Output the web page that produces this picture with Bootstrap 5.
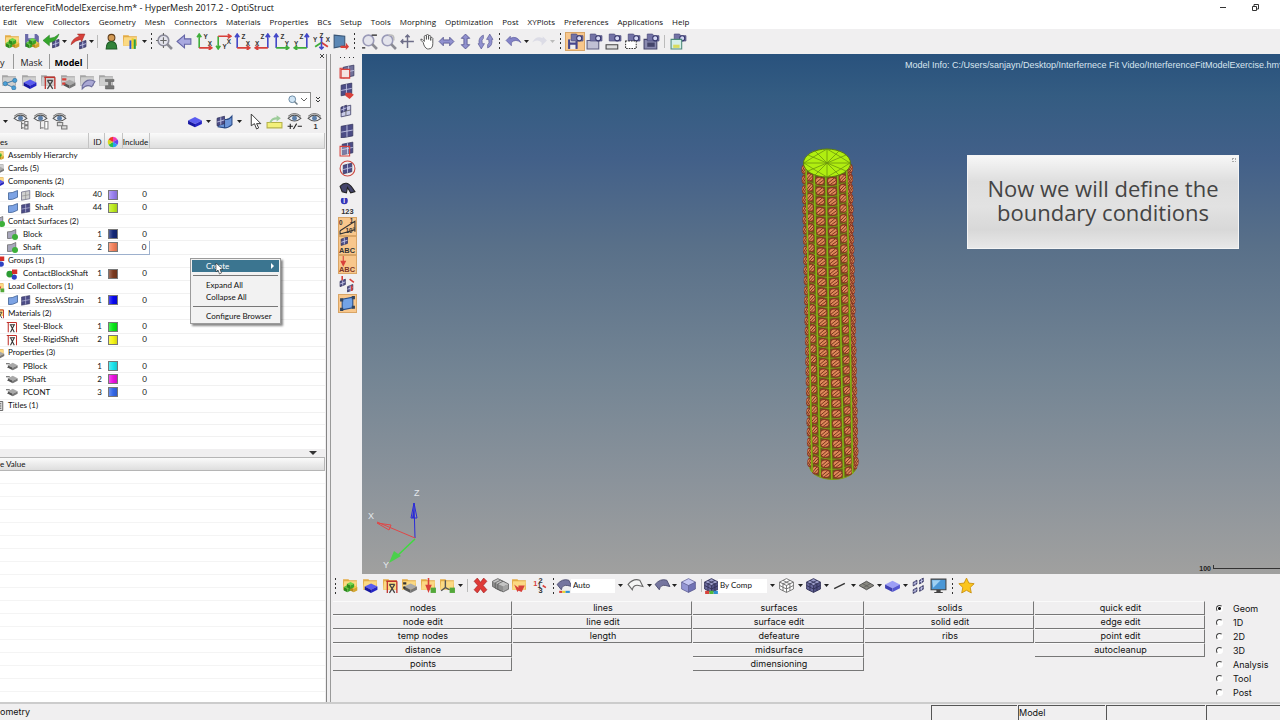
<!DOCTYPE html>
<html lang="en">
<head>
<meta charset="utf-8">
<meta name="viewport" content="width=device-width, initial-scale=1">
<title>HyperMesh 2017.2 - OptiStruct</title>
<link href="https://cdn.jsdelivr.net/npm/bootstrap@5.3.0/dist/css/bootstrap.min.css" rel="stylesheet">
<style>
  body { font: 8px/13px Lato, "Liberation Sans", sans-serif; color: #111; background: #f0eff0; }
  button, select, input { font: inherit; color: inherit; }
  svg { display: block; }
  .title-strip { height: 16px; background: #fff; font: 9px/16px "Open Sans", sans-serif; color: #111; }
  .title-text { margin-left: -4px; }
  .menu-strip { height: 13px; background: #fff; gap: 9px; padding-left: 3px; font: 8px/12px "Open Sans", sans-serif; }
  .menu-strip a { color: #111; text-decoration: none; }
  .tool-strip { height: 25px; padding-bottom: 1px; }
  .slot { flex: none; display: flex; align-items: center; justify-content: center; padding: 0; border: 0; background: none; }
  .slot.on { background: #f8c78c; outline: 1px solid #d9a566; outline-offset: -1px; height: 19px; }
  .left-pane { width: 331px; flex: none; border-right: 1px solid #9a9a9a; padding-right: 3px; }
  .left-inner { border-right: 1px solid #858585; padding-right: 1px; }
  .tab-strip { height: 16px; font: 9px/18px "Open Sans", sans-serif; border-bottom: 1px solid #fff; }
  .tab-strip a { color: #222; text-decoration: none; border-right: 1px solid #999; }
  .tab-strip .t1 { width: 14px; } .tab-strip .t2 { width: 36px; } .tab-strip .t3 { width: 38px; color: #000; }
  .folder-strip { height: 22px; }
  .find-row { height: 17px; }
  .find-box { width: 311px; height: 16px; border: 1px solid #8c8c8c; border-left: 0; background: #fff; }
  .find-box input { border: 0; outline: 0; min-width: 0; background: transparent; }
  .filter-strip { height: 24px; }
  .model-tree { width: 100%; height: 304px; table-layout: fixed; background: #fff; border-collapse: collapse; }
  .model-tree th { height: 15px; padding: 3px 0 0; font-weight: 400; background: linear-gradient(#fafafa, #dedede); border-right: 1px solid #c4c4c4; border-bottom: 1px solid #c8c8c8; line-height: 11px; }
  .model-tree td { padding: 0; border-bottom: 1px solid #f1f1f1; line-height: 11px; white-space: nowrap; overflow: hidden; }
  .model-tree .num { text-align: right; padding-right: 2px; }
  .model-tree .picked td:not(:last-child) { border-top: 1px solid #9db0cd; border-bottom: 1px solid #9db0cd; }
  .model-tree .picked td:nth-child(4) { border-right: 1px solid #9db0cd; }
  .node { display: flex; align-items: center; gap: 1px; height: 11px; }
  .node svg { flex: none; }
  .node.top { margin-left: -7px; gap: 3px; }
  .node.leaf { padding-left: 6px; gap: 5px; }
  .node.comp { padding-left: 7px; }
  .node.comp span:last-child { padding-left: 2px; }
  .chip { display: block; width: 10px; height: 10px; margin: 0 auto; border: 1px solid #777; background-image: linear-gradient(90deg, #fff4, #fff0 50%, #0002); }
  .splitter { height: 8px; }
  .value-head { height: 14px; background: linear-gradient(#fafafa, #dedede); border: 1px solid #b5b5b5; border-left: 0; line-height: 13px; }
  .value-body { background: repeating-linear-gradient(#fff 0 12px, #f4f4f4 12px 13px); }
  .popup { left: 190px; top: 204px; width: 91px; border: 1px solid #9b9b9b; background: #f2f2f2; box-shadow: 2px 2px 2px #0007; padding: 1px; z-index: 5; }
  .popup button { display: block; width: 100%; border: 0; background: none; text-align: left; padding: 0 0 0 14px; line-height: 12px; }
  .popup .hot { background: #3b7590; color: #fff; }
  .popup hr { margin: 3px 1px; border-color: #777; opacity: 1; }
  .popup .pointer-mark { left: 24px; top: 3px; }
  .side-strip { width: 31px; flex: none; }
  .side-stack { height: 251px; padding-left: 1px; }
  .side-strip .slot { height: 19px; width: 19px; }
  .scene { background: linear-gradient(#29527d 0, #345c82 8%, #426089 20%, #597089 37%, #748594 62%, #8b939b 82%, #a0a09f 100%); }
  .scene .info { left: 543px; top: 5px; font: 9px/13px "Liberation Sans", sans-serif; color: #d9e6f0; white-space: nowrap; }
  .part { left: calc(50% - 21px); top: 93px; }
  .triad { left: 0; bottom: 0; }
  .ruler { right: 0; bottom: 1px; font: bold 7px/8px "Liberation Sans", sans-serif; color: #222; gap: 2px; }
  .ruler i { width: 67px; height: 4px; border: solid #333; border-width: 0 0 1px 1px; }
  .note { right: 41px; top: 101px; width: 272px; height: 94px; padding-bottom: 5px; border: 1px solid #f5f5f5; background: linear-gradient(#f7f7f7, #dedede 28%, #e2e2e2 55%, #d8d8d8 80%, #e8e8e8); font: 22px/24px "Open Sans", sans-serif; color: #444; }
  .note i { right: 2px; top: 2px; width: 4px; height: 4px; border: 1px dotted #aaa; }
  .lower-strip { height: 23px; }
  .pick { appearance: none; border: 0; border-radius: 0; height: 14px; padding: 0 0 0 2px; background: #fff; }
  .auto { width: 44px; } .bycomp { width: 49px; }
  .panel { display: grid; grid-template-columns: 180fr 180fr 172fr 170fr 171fr 74px; padding: 4px 0 0 2px; height: 105px; flex: none; font: 9px/13px Inter, "Liberation Sans", sans-serif; }
  .panel .stack { padding-right: 1px; }
  .panel button { display: block; width: 100%; height: 14px; padding: 0 0 0 2px; border: 0; border-right: 1px solid #777; border-bottom: 1px solid #777; border-top: 1px solid #fafafa; background: none; line-height: 12px; }
  .panel label { display: flex; align-items: center; height: 14px; gap: 10px; padding-left: 10px; }
  .panel input { appearance: none; width: 7px; height: 7px; margin: 0; border-radius: 50%; border: 1px solid #444; border-right-color: #fff; border-bottom-color: #fff; background: #fff; }
  .panel input:checked { background: radial-gradient(#111 0 1px, #fff 2px); }
  .foot { height: 18px; border-top: 2px solid #ccc; font: 9px/14px Inter, "Liberation Sans", sans-serif; padding-top: 1px; }
  .foot .cell { border-top: 1px solid #555; border-left: 1px solid #555; margin-right: 1px; }
  .c1 { width: 86px; } .c2 { width: 87px; } .c3 { width: 99px; } .c4 { width: 74px; }
</style>
</head>
<body>
<div class="vh-100 d-flex flex-column overflow-hidden">
  <header class="title-strip d-flex justify-content-between flex-shrink-0">
    <span class="title-text">nterferenceFitModelExercise.hm* - HyperMesh 2017.2 - OptiStruct</span>
    <span class="d-flex align-items-start pe-3 me-1">
      <button class="slot me-4 pt-1" aria-label="Minimize"><svg width="8" height="8"><path d="M1 3.500h6" stroke="#333"/></svg></button>
      <button class="slot pt-1" aria-label="Restore"><svg width="9" height="9" fill="none" stroke="#333"><path d="M1.500 2.500h4v4h-4zM3 2V.5h4.500v4.500H6"/></svg></button>
    </span>
  </header>
  <nav class="menu-strip d-flex flex-shrink-0">
    <a href="#">Edit</a><a href="#">View</a><a href="#">Collectors</a><a href="#">Geometry</a><a href="#">Mesh</a><a href="#">Connectors</a><a href="#">Materials</a><a href="#">Properties</a><a href="#">BCs</a><a href="#">Setup</a><a href="#">Tools</a><a href="#">Morphing</a><a href="#">Optimization</a><a href="#">Post</a><a href="#">XYPlots</a><a href="#">Preferences</a><a href="#">Applications</a><a href="#">Help</a>
  </nav>
  <div class="tool-strip d-flex align-items-center flex-shrink-0" data-bar="gap:3 open:19 save:20 import:18 caret:8 export:20 caret:6 sep:7 user:20 report:19 caret:8 dots:7 fit:19 back:20 xy:20 xyd:19 xz:19 xzl:20 yz:19 yzl:20 iso:20 screen:19 dots:10 zoom:18 zoom2:20 pan4:19 hand:20 horiz:19 vert:19 spin:20 dots:9 undo:18 caret:8 redo:18 caretoff:9 dots:8 cam1*:20 cam2:19 cam3:18 cam4:20 cam5:19 sep:7 cam6:20"></div>

  <div class="d-flex flex-fill overflow-hidden">
    <aside class="left-pane position-relative d-flex flex-column">
      <div class="left-inner d-flex flex-column flex-fill overflow-hidden">
        <div class="tab-strip d-flex position-relative text-center flex-shrink-0">
          <a class="t1 text-start" href="#">y</a><a class="t2" href="#">Mask</a><a class="t3 fw-bold" href="#">Model</a>
          <button class="slot ms-auto align-self-start" aria-label="Close"><svg width="6" height="6" stroke="#444"><path d="M1 0l4 4M5 0L1 4"/></svg></button>
        </div>
        <div class="folder-strip d-flex align-items-center flex-shrink-0" data-bar="fshare:19 fslab:20 fmat:19 fprop:20 fload:19 fstack:19"></div>
        <div class="find-row d-flex flex-shrink-0">
          <div class="find-box d-flex align-items-center">
            <input class="flex-fill" type="text" aria-label="Search">
            <span data-icon="glass"></span><svg width="11" height="8" fill="none" stroke="#666"><path d="M2 2l3 3 3-3"/></svg>
          </div>
          <button class="slot ps-1" aria-label="More"><svg width="7" height="9" fill="none" stroke="#333"><path d="M1 1l2 2 2-2M1 4l2 2 2-2"/></svg></button>
        </div>
        <div class="filter-strip d-flex align-items-center flex-shrink-0" data-bar="gap:1 caret:8 gap:2 eye1:19 eye2:20 eye3:19 gap:116 slab:20 caret:6 gap:2 surf:22 caret:8 gap:2 arrow:20 yellow:19 eye4:20 eye5:20"></div>
        <table class="model-tree flex-shrink-0">
          <colgroup><col style="width:88px"><col style="width:16px"><col style="width:18px"><col style="width:27px"><col></colgroup>
          <thead><tr><th>es</th><th class="num">ID</th><th><span class="d-flex justify-content-center" data-icon="wheel"></span></th><th class="text-center">Include</th><th></th></tr></thead>
          <tbody id="tree"></tbody>
          <tfoot><tr><td colspan="5">&nbsp;</td></tr><tr><td colspan="5">&nbsp;</td></tr></tfoot>
        </table>
        <div class="bg-white pt-2 pb-1 flex-shrink-0"></div>
        <div class="splitter d-flex justify-content-end flex-shrink-0 pe-2 align-items-center"><svg width="8" height="5"><path d="M0 0h8L4 4z" fill="#333"/></svg></div>
        <div class="value-head flex-shrink-0">e Value</div>
        <div class="value-body flex-fill"></div>
      </div>
      <div class="popup position-absolute" role="menu">
        <button class="hot" role="menuitem"><span class="d-flex justify-content-between align-items-center pe-1">Create<svg width="4" height="6"><path d="M0 0l3 3-3 3z" fill="#fff"/></svg></span></button>
        <hr><button role="menuitem">Expand All</button><button role="menuitem">Collapse All</button>
        <hr><button role="menuitem">Configure Browser</button>
        <svg class="pointer-mark position-absolute" width="9" height="13" viewBox="0 0 9 13"><path d="M1 1v9l2-2 1.500 4 2-1L5 7.500h3z" fill="#fff" stroke="#222" stroke-width=".6"/></svg>
      </div>
    </aside>

    <main class="d-flex flex-column flex-fill overflow-hidden">
      <div class="d-flex flex-fill overflow-hidden">
        <div class="side-strip d-flex flex-column align-items-center">
          <svg width="16" height="8" fill="#333"><path d="M1 3h1v1H1zM5 3h1v1H5zM10 3h1v1h-1zM14 3h1v1h-1z"/></svg>
          <div class="side-stack d-flex flex-column align-items-center justify-content-between" data-bar="m1:19 m2:19 m3:19 m4:19 m5:19 m6:19 m7:19 m8:19 m9*:19 m10*:19 m11*:19 m12:19 m13*:19"></div>
        </div>
        <section class="scene position-relative flex-fill overflow-hidden">
          <div class="info position-absolute">Model Info: C:/Users/sanjayn/Desktop/Interfernece Fit Video/InterferenceFitModelExercise.hm*</div>
          <svg class="part position-absolute" width="60" height="336" viewBox="0 0 60 336" id="part"></svg>
          <svg class="triad position-absolute" width="80" height="90" viewBox="0 0 80 90" fill="none" font-family="Liberation Sans" font-size="9">
            <path d="M53 54L52 19M52 19l-3 15h6z" stroke="#2b2bd8"/><path d="M52 22l-2 12h2z" fill="#2b2bd8"/>
            <path d="M53 54L15 38M15 39l14 2-2 5z" stroke="#e04747"/>
            <path d="M53 55L33 74" stroke="#3ddc3d" stroke-width="1.500"/><path d="M27 79l5-12 7 5z" fill="#4bd04b"/>
            <g fill="#e4e8ec"><text x="52" y="12">Z</text><text x="6" y="35">X</text><text x="21" y="84">Y</text></g>
          </svg>
          <div class="ruler position-absolute d-flex"><span>100</span><i></i></div>
          <div class="note position-absolute d-flex align-items-center justify-content-center text-center"><span>Now we will define the<br>boundary conditions</span><i class="position-absolute"></i></div>
        </section>
      </div>
      <div class="lower-strip d-flex align-items-center flex-shrink-0">
        <div class="d-flex align-items-center" data-bar="dots:10 ccubes:19 cslab:20 cmat:20 cprop:19 cload:19 csys:18 caret:8 sep:6 del:20 cards:20 cmove:19 renum:20 dots:9 geo:13"></div>
        <select class="pick auto" aria-label="Geometry colour"><option>Auto</option></select>
        <div class="d-flex align-items-center" data-bar="caret:10 sheet:20 caret:8 sheetf:18 caret:7 cube:20 sep:6 meshc:14"></div>
        <select class="pick bycomp" aria-label="Element colour"><option>By Comp</option></select>
        <div class="d-flex align-items-center" data-bar="caret:10 wcube:19 caret:8 mcube:18 caret:8 line:19 caret:8 plate:18 caret:8 slabl:18 caret:8 bits:19 monitor:20 dots:9 star:19"></div>
      </div>
      <div class="panel">
        <div class="stack"><button>nodes</button><button>node edit</button><button>temp nodes</button><button>distance</button><button>points</button></div>
        <div class="stack"><button>lines</button><button>line edit</button><button>length</button></div>
        <div class="stack"><button>surfaces</button><button>surface edit</button><button>defeature</button><button>midsurface</button><button>dimensioning</button></div>
        <div class="stack"><button>solids</button><button>solid edit</button><button>ribs</button></div>
        <div class="stack"><button>quick edit</button><button>edge edit</button><button>point edit</button><button>autocleanup</button></div>
        <div>
          <label><input type="radio" name="page" checked>Geom</label><label><input type="radio" name="page">1D</label><label><input type="radio" name="page">2D</label><label><input type="radio" name="page">3D</label><label><input type="radio" name="page">Analysis</label><label><input type="radio" name="page">Tool</label><label><input type="radio" name="page">Post</label>
        </div>
      </div>
    </main>
  </div>
  <footer class="foot d-flex flex-shrink-0">
    <span class="flex-fill">ometry</span><span class="cell c1"></span><span class="cell c2">Model</span><span class="cell c3"></span><span class="cell c4 me-0"></span>
  </footer>
</div>

<script>
// Drawing helpers, all on a 16 x 16 canvas
const p = (d, fill, stroke = 'none', w = 1) => `<path d="${d}" fill="${fill}" stroke="${stroke}" stroke-width="${w}"/>`;
const folder = (a, b) => p('M1 2h5l1 1h7v9H1z', b) + p('M2 4h12l-1 8H1z', a);
const yf = folder('#fbd983', '#e3ac45'), gf = folder('#cfcfcf', '#a5a5a5');
const cube = (x, y, s, t, l, r) => p(`M${x} ${y - s}l${s} ${s / 2}l${-s} ${s / 2}l${-s} ${-s / 2}z`, t) +
  p(`M${x - s} ${y - s / 2}l${s} ${s / 2}v${s}l${-s} ${-s / 2}z`, l) + p(`M${x + s} ${y - s / 2}l${-s} ${s / 2}v${s}l${s} ${-s / 2}z`, r);
const slab = (x, y, s, t, l, r) => p(`M${x} ${y - s / 2}l${s} ${s / 2}l${-s} ${s / 2}l${-s} ${-s / 2}z`, t) +
  p(`M${x - s} ${y}l${s} ${s / 2}v${s / 2}l${-s} ${-s / 2}z`, l) + p(`M${x + s} ${y}l${-s} ${s / 2}v${s / 2}l${s} ${-s / 2}z`, r);
const blueSlab = s => slab(8.5, 9, s, '#5a5cf0', '#1616a0', '#2525c4');
const graySlab = (x, y, s) => slab(x, y, s, '#a9a9a9', '#555', '#777');
const mesh = (x, y, w, f = '#4c4c86', l = '#c9cbe8') => p(`M${x} ${y + 2}l${w} -2v${w}l${-w} 2z`, f, '#33335c', .7) +
  p(`M${x + w / 2} ${y + 1}v${w}M${x} ${y + 2 + w / 2}l${w} -2`, 'none', l, .8);
const tri = cube(5, 11, 3.4, '#5ac83a', '#2c8a1c', '#3aa628') + cube(11, 11, 3.4, '#f0c84a', '#b98a1a', '#d7a62a') + cube(8, 8, 3.4, '#6fd84a', '#2c8a1c', '#3aa628');
const mat = p('M4 4h10M5 4v11M14 4v11', 'none', '#c0322c', 1.2) + p('M7 15l5-8M12 15L7 7M7 7h5', 'none', '#444', 1.2);
const eye = p('M2 5q6-6 12 0q-6 5-12 0z', '#e9ecf2', '#555', 1) + '<circle cx="8" cy="5" r="2.300" fill="#5d7fa8"/>' + p('M2 3q6-5 12 0', 'none', '#555', .8);
const axis = (v, h, a, b, flip, top) => {
  const x = flip ? 13 : 3, y = top ? 3 : 14, e = flip ? 1 : 15, f = top ? 15 : 1;
  return p(`M${x} ${y}V${f}M${x - 2} ${top ? 12 : 4}L${x} ${f}L${x + 2} ${top ? 12 : 4}`, 'none', v, 1.5) + p(`M${x} ${y}H${e}M${flip ? 4 : 12} ${y - 2}L${e} ${y}L${flip ? 4 : 12} ${y + 2}`, 'none', h, 1.5) +
    `<g font-family="Liberation Sans" font-weight="bold" font-size="6" fill="#333"><text x="${flip ? 6 : 7}" y="${top ? 15 : 6}">${a}</text><text x="${flip ? 1 : 11}" y="${top ? 10 : 12}">${b}</text></g>`;
};
const R = '#d8413b', G = '#3fae3a', B = '#4247c8';
const lens = (c = '#9a9ab8') => `<circle cx="7" cy="7" r="5" fill="#e4e4ec" stroke="${c}" stroke-width="1.500"/>` + p('M10.500 10.500l4.500 4.500', 'none', '#8b8b93', 2.5);
const cam = p('M4 1h5l1 1.500h5v5H4z', '#7373a6', '#4d4d7c', .7) + '<circle cx="11.500" cy="5" r="2.400" fill="#d5d8f4" stroke="#36366b"/>';
const dbl = p('M1 8l4-4v2.500h6V4l4 4-4 4V9.500H5V12z', '#9191cf', '#55558f', .8);
const small = (t, x, y, s = 6, c = '#333') => `<text x="${x}" y="${y}" font-family="Liberation Sans" font-weight="bold" font-size="${s}" fill="${c}">${t}</text>`;
const pads = p('M1 7q5-6 11-4l3 6-4-1q-5-1-6 4z', '#75759f', '#444469', .8);
const icons = {
  open: yf + tri, save: p('M1 1h11l2 2v10H1z', '#6a6aa8') + p('M4 1h6v4H4zM3 8h9v5H3z', '#e9e9f5') + tri,
  import: mesh(9, 6, 6) + p('M0 7l6-5v3q5 0 9-4q-2 7-9 8v3z', '#35a62c', '#1f7a1c', .5), export: mesh(9, 7, 6) + p('M14 1H7l2 2q-7 2-8 8q4-4 9-5l1 2z', R, '#992019', .5),
  user: '<circle cx="8" cy="4.500" r="3.200" fill="#d39a55" stroke="#5f3c18"/>' + p('M3 15q0-7 5-7t5 7z', '#31823a', '#1e5a26'), report: yf + p('M7 7h2v8H7z', '#2e58d0') + p('M9 5h2v10H9z', '#f0d020') + p('M11 6h2v9h-2z', '#30a040'),
  fit: lens('#8e8e9e') + p('M7 4v6M4 7h6M7 0v2M7 12v2M0 7h2', 'none', '#666'), back: p('M1 8l7-6v3.500h6v5H8V14z', '#a9a9e0', '#6565a5', 1),
  xy: axis(G, R, 'Y', 'X'), xyd: axis(G, R, 'Y', 'X', 0, 1), xz: axis(B, R, 'Z', 'X'), xzl: axis(B, R, 'Z', 'X', 1), yz: axis(B, G, 'Z', 'Y'), yzl: axis(B, G, 'Z', 'Y', 1),
  iso: p('M8 10V4', 'none', B, 1.6) + p('M8 9l-6 4', 'none', G, 1.8) + p('M8 9l6 4', 'none', R, 1.8) + p('M8 9v6M6 13l2 2 2-2', 'none', B, 1.5) + small('Z', 6, 5) + small('Y', 0, 8) + small('X', 12, 8),
  screen: p('M2 2l10 1v9L2 14z', '#5b87b5', '#3a5676') + p('M8 12h5V9l3 4-3 3v-2H8z', R),
  zoom: lens() + p('M10 2h5M1 14h3', 'none', '#222', 1.4), zoom2: lens() + p('M8 2q6-1 5 5', 'none', '#bbb', 1.5), pan4: p('M8 2v12M2 8h12M6 4l2-2 2 2M4 6L2 8l2 2', 'none', '#6d6d88', 1.4),
  hand: p('M4 9L2 7q-1-2 1-1l2 2V3q1-2 2 0v3-4q1-2 2 0v4-3q1-2 2 0v4-2q1-2 2 0v5q0 5-4 5H8q-3-1-4-6z', '#fff', '#555', .9), horiz: dbl, vert: `<g transform="rotate(90 8 8)">${dbl}</g>`,
  spin: p('M6 2q-5 2-4 8H1l3 5 3-5H5q-1-4 1-5zM10 14q5-2 4-8h1l-3-5-3 5h2q1 4-1 5z', '#9191cf', '#55558f', .6),
  undo: p('M1 7l5 5V9q4-4 9 0Q11 2 5 5V3z', '#8383c8', '#5b5b9b', .6), redo: p('M15 7l-5 5V9q-4-4-9 0q4-7 10-4V3z', '#dcdce6'),
  cam1: p('M1 6h9v9H1z', '#46468c') + p('M3 6h5v3H3zM3 11h5v4H3z', '#eee') + cam, cam2: p('M1 7h11v8H1z', '#c0c0d4', '#5c5c80') + cam, cam3: cam + p('M1 11h11v4H1z', '#ddd', '#444'), cam4: cam + '<path d="M1.500 7.500h10v7h-10z" fill="#fff" stroke="#333" stroke-dasharray="1.500 1"/>', cam5: p('M1 6h12v9H1z', '#8a8ab0', '#44446a') + cam + p('M4 9h7v4H4z', '#44446a'), cam6: cam + p('M1 6h10v9H1z', '#d5efe8', '#4d8a7a') + p('M3 11h6v3H3z', '#d8dc5c'),
  fshare: gf + p('M4 10l8-3M4 10l8 4', 'none', '#3c7cae') + '<g fill="#4aa0d8" stroke="#25638f" stroke-width=".5"><circle cx="4" cy="10" r="2"/><circle cx="13" cy="7" r="2"/><circle cx="12" cy="14" r="2"/></g>',
  fslab: gf + blueSlab(6), fmat: gf + mat, fprop: gf + graySlab(9, 9, 5.5) + p('M2 6h4M2 10h3', 'none', R, 2), fload: gf + p('M3 12q4-8 12-4l-3 5q-5-3-9 2z', '#aaa8d4', '#6d6d9d'), fstack: gf + p('M7 6h8v2h-3v4h3v3H7v-3h3V8H7z', '#777', '#555', .5),
  eye1: eye + p('M9 8v7M9 10h2M9 14h2M12 8h3v3h-3zM12 12h3v3h-3z', 'none', '#777'), eye2: eye + p('M8 8v7M8 14h3M12 8h3v7h-3z', '#fff', '#888'), eye3: eye + p('M6 9h5v3H6zM10 12h5v3h-5z', '#ddd', '#777'), eye4: eye + p('M4 10v5M1.500 12.500h5M7 15l3-5M11 12.500h4', 'none', '#222'), eye5: eye + small('1', 7, 15, 7),
  slab: slab(7.5, 7, 6.5, '#5a5cf0', '#1616a0', '#2525c4'), surf: p('M2 5l6 1v8l-6-1zM8 6q4 1 7-3v8q-3 3-7 3z', '#6c95d8', '#294a86') + mesh(1, 3, 7), arrow: p('M4 1v11l3-2 2 5 2-1-2-4h4z', '#fff', '#333', .9), yellow: p('M1 9h14v5H1z', '#f3f07a', '#b5b14a') + p('M3 9q2-5 7-5V2l4 3-4 3V6Q6 6 5 9z', '#9dcc9a'),
  m1: p('M1 5h9v9H1z', '#fff3', R) + mesh(4, 2, 10, '#71719a') + p('M2 6h8v8H2z', '#f4e4e2', R), m2: mesh(2, 1, 10) + p('M6 10h5l3 2-4 4-4-3z', R), m3: mesh(2, 3, 9, '#c9cbe8', '#666') + mesh(2, 3, 5), m4: mesh(2, 3, 11), m5: mesh(3, 2, 10) + p('M1 6h9v9H1z', '#fff4', R), m6: mesh(4, 3, 8) + '<circle cx="8" cy="8" r="7" fill="none" stroke="#cc4840"/>', m7: p('M1 7q6-7 12 2l2 3-4 1-3-5-1 5-4-1z', '#44446a', '#222'),
  m8: '<circle cx="5" cy="2.500" r="3.300" fill="#3535b8"/>' + small('i', 4, 5, 6, '#fff') + small('123', 2, 15, 7), m9: p('M1 12L15 3v10M1 12v3l14-4', 'none', '#333') + small('0', 0, 7) + small('1', 10, 5) + small('10°', 6, 14), m10: mesh(2, 0, 6) + small('ABC', 0, 15, 7), m11: p('M4 0v7M2 5l2 4 2-4z', R, R) + small('ABC', 0, 15, 7, '#7b3426'), m12: mesh(1, 3, 5) + mesh(8, 8, 5) + p('M3 0v4M12 9v5M10 3l4 3', 'none', R, 1.5), m13: p('M3 4l10-2v10L3 14z', '#72a3e6', '#254d8a') + p('M1 3h3v3H1zM12 1h3v3h-3zM1 12h3v3H1zM12 10h3v3h-3z', '#33445c'),
  ccubes: yf + tri, cslab: yf + blueSlab(6), cmat: yf + mat, cprop: yf + graySlab(9, 9, 6) + p('M2 6h3M2 10h2', 'none', '#333', 2), cload: yf + p('M8 1v9M6 8l2 5 2-5z', R, R, 1.5) + p('M10 10h5v5h-5z', '#53a83a'), csys: yf + p('M6 3v7l-4 3M6 10l4 2', 'none', '#555', 1.3) + p('M10 10h5v5h-5z', '#53a83a'),
  del: p('M2 4l3-3 3 4 3-4 3 3-3.500 4 3.500 4-3 3-3-4-3 4-3-3 3.500-4z', '#df3b38', '#9d1d1c', .6),
  cards: [[5.5, 6.5], [8, 8], [10.5, 9]].map(([x, y]) => cube(x, y, 5, '#c4c4c4', '#8f8f8f', '#a5a5a5') + p(`M${x} ${y - 5}l5 2.500v5l-5 2.500l-5-2.500v-5z`, 'none', '#555', .7)).join(''),
  cmove: yf + p('M3 7l4 3V8h6l-3 6-3-1-1 1z', R), renum: small('1', 2, 8, 7, R) + small('2', 7, 6, 7) + small('3', 7, 15, 7) + small('1', 6, 10, 6) + p('M11 8l3 2', 'none', R, 1.5),
  geo: pads + p('M3 13h3v2H3z', R) + p('M6 13h3v2H6z', '#e8d32c') + p('M9 13h4v2H9z', '#2f8fd0'), sheet: p('M1 7q5-6 11-4l3 6-4-1q-5-1-6 4z', '#f6f6f6', '#666'), sheetf: pads, cube: cube(8, 8, 6.5, '#c5c7f2', '#9496d4', '#7072b4') + p('M8 1.500l6.500 3.300v6.500L8 14.500l-6.500-3.200V4.800zM1.500 4.800L8 8l6.500-3.200M8 8v6.500', 'none', '#4c4c82', .6),
  line: p('M3 11l10-5', 'none', '#333', 1.3), plate: p('M1 8l7-4 7 4-7 4z', '#87877f', '#444', .8) + p('M4 6l7 4M5 10l7-4', 'none', '#555', .6), slabl: slab(8, 7, 7, '#9c9ef6', '#3f41b4', '#5557d0'), bits: mesh(3, 3, 3.500) + mesh(9, 1, 3.500) + mesh(3, 10, 3.500) + mesh(9, 8, 3.500), monitor: p('M1 2h14v10H1z', '#4a97d6', '#444') + p('M6 12h4v2h2v1H4v-1h2z', '#444') + p('M2 3h8L3 10z', '#9fd0f2'),
  star: p('M8 1l2.200 4.700 5 .6-3.700 3.500 1 5.200L8 12.500 3.500 15l1-5.200L.8 6.300l5-.6z', '#fbc51d', '#c78d0c', .8),
  glass: '<circle cx="7" cy="7" r="4.500" fill="#cfe4f4" stroke="#6b8aa5" stroke-width="1.300"/>' + p('M10 10l4 4', 'none', '#70808c', 2),
  wheel: p('M8 8V1a7 7 0 0 1 6 3.500z', '#f03cb4') + p('M8 8l6-3.500a7 7 0 0 1 0 7z', '#6a42e8') + p('M8 8l6 3.500a7 7 0 0 1-6 3.500z', '#28a0f0') + p('M8 8v7a7 7 0 0 1-6-3.500z', '#24c04c') + p('M8 8l-6 3.500a7 7 0 0 1 0-7z', '#d8d820') + p('M8 8L2 4.500A7 7 0 0 1 8 1z', '#f03c28'),
  plane: p('M2 5q4 1 12-3v9q-7 4-12 3z', '#7da3e4', '#37598f'), mg: mesh(2, 2, 11, '#d0d0d0', '#888'), md: mesh(2, 2, 11), cs: p('M2 5q4 1 11-3v9q-6 4-11 3z', '#a7a7bc', '#666') + '<circle cx="12" cy="12" r="4" fill="#3db03a"/>',
  grp: '<circle cx="5" cy="8" r="4.500" fill="#2c9c34"/>' + p('M8 2h7v6H8z', '#d42e2a') + '<circle cx="11" cy="12" r="3.500" fill="#2f42c4"/>', mt: p('M1 2h13M3 2v13M14 2v13', 'none', '#c0322c', 1.4) + p('M6 15l5-10M11 15L6 5M5 5h7', 'none', '#333', 1.4), pr: graySlab(9, 7, 6.500) + p('M0 5h5M2 10h3', 'none', '#555', 1.5), list: p('M3 2h10v12H3z', '#ddd', '#444') + p('M5 5h6M5 8h6M5 11h6', 'none', '#333'), blue: yf + blueSlab(6)
};
const cubeNet = 'M8 1.500l6.500 3.300v6.500L8 14.500l-6.500-3.200V4.800zM1.500 4.800L8 8l6.500-3.200M8 8v6.500M4.700 3.200l6.500 3.300v6.500M11.300 3.200L4.700 6.500V13M1.500 8L8 11.300 14.500 8';
icons.wcube = p(cubeNet, '#fff', '#666', .8);
icons.mcube = cube(8, 8, 6.5, '#9a9cc8', '#6a6a9c', '#525284') + p(cubeNet, 'none', '#2f2f55', .8);
icons.meshc = icons.mcube + p('M2 13h4v3H2z', R) + p('M6 13h4v3H6z', '#4fb83a') + p('M10 13h4v3h-4z', '#2f8fd0');
const draw = (name, s) => `<svg class="flex-shrink-0" width="${s}" height="${s}" viewBox="0 0 16 16" aria-hidden="true">${icons[name]}</svg>`;

document.querySelectorAll('[data-bar]').forEach(bar => {
  bar.innerHTML = bar.dataset.bar.split(' ').map(item => {
    let [name, w] = item.split(':'), on = name.endsWith('*');
    name = name.replace('*', '');
    const box = inner => `<span class="slot" style="width:${w}px">${inner}</span>`;
    if (name === 'gap') return box('');
    if (name === 'caret' || name === 'caretoff') return box(`<svg width="5" height="3"><path d="M0 0h5L2.500 3z" fill="${name === 'caret' ? '#222' : '#bbb'}"/></svg>`);
    if (name === 'sep') return box('<svg width="1" height="13"><path d="M0 0h1v13H0z" fill="#bbb"/></svg>');
    if (name === 'dots') return box('<svg width="2" height="16"><path d="M0 0h1v2H0zM0 5h1v2H0zM0 9h1v2H0zM0 14h1v2H0z" fill="#333"/></svg>');
    return `<button class="slot${on ? ' on' : ''}" style="width:${w}px" aria-label="${name}">${draw(name, 17)}</button>`;
  }).join('');
});
document.querySelectorAll('[data-icon]').forEach(el => el.innerHTML = draw(el.dataset.icon, 12));

// [kind, icons, label, id, colour]
const rows = [
  ['top', 'open', 'Assembly Hierarchy'], ['top', 'fprop', 'Cards (5)'], ['top', 'blue', 'Components (2)'],
  ['comp', 'plane mg', 'Block', 40, '#9a80f0'], ['comp', 'plane md', 'Shaft', 44, '#bdec1c'],
  ['top', 'cs', 'Contact Surfaces (2)'], ['leaf', 'cs', 'Block', 1, '#142878'], ['leaf', 'cs', 'Shaft', 2, '#f5825c'],
  ['top', 'grp', 'Groups (1)'], ['leaf', 'grp', 'ContactBlockShaft', 1, '#7c3a20'],
  ['top', 'cload', 'Load Collectors (1)'], ['comp', 'plane md', 'StressVsStrain', 1, '#0808f0'],
  ['top', 'cmat', 'Materials (2)'], ['leaf', 'mt', 'Steel-Block', 1, '#08e818'], ['leaf', 'mt', 'Steel-RigidShaft', 2, '#f5f514'],
  ['top', 'cprop', 'Properties (3)'], ['leaf', 'pr', 'PBlock', 1, '#1ce4ec'], ['leaf', 'pr', 'PShaft', 2, '#ec10e0'], ['leaf', 'pr', 'PCONT', 3, '#3468e8'],
  ['top', 'list', 'Titles (1)']
];
document.getElementById('tree').innerHTML = rows.map((r, i) => `<tr${i === 7 ? ' class="picked"' : ''}><td><span class="node ${r[0]}">${r[1].split(' ').map(n => draw(n, 12)).join('')}<span>${r[2]}</span></span></td>` +
  `<td class="num">${r[3] || ''}</td><td>${r[4] ? `<span class="chip" style="background-color:${r[4]}"></span>` : ''}</td><td class="num">${r[3] ? 0 : ''}</td><td></td></tr>`).join('');

// Meshed shaft: cells wrapped round a slightly tilted cylinder
(() => {
  const rad = a => a * Math.PI / 180, n = x => x.toFixed(1);
  const at = (a, t) => [27 + 6 * t + 23.5 * Math.sin(rad(a)), 16 + 303 * t + 13.5 * Math.cos(rad(a))];
  let out = '<path d="M3.500 16L9.500 319A23.500 13.500 0 0 0 56.500 319L50.500 16z" fill="#6b5a1c"/>';
  for (let k = 1; k <= 30; k++) {
    const y = 16 + 10.1 * k, x = 3.5 + k * .2;
    out += `<path d="M${n(x)} ${n(y)}A23.500 13.500 0 0 0 ${n(x + 47)} ${n(y)}" fill="none" stroke="#7f9a1a" stroke-width="1"/>`;
  }
  for (const a of [-84, -48, -18, 12, 42, 72, 88]) for (let k = 0; k < 30; k++) {
    const [x, y] = at(a, (k + .5) / 30), w = Math.max(2.2, 5.2 * Math.cos(rad(a)));
    out += `<ellipse cx="${n(x)}" cy="${n(y)}" rx="${n(w)}" ry="4.500" fill="#8a3423"/><ellipse cx="${n(x)}" cy="${n(y)}" rx="${n(w * .78)}" ry="3.200" fill="#e08a5a"/>` +
      `<path d="M${n(x - w * .8)} ${n(y + 2)}L${n(x + w * .4)} ${n(y - 3)}M${n(x - w * .3)} ${n(y + 3)}L${n(x + w * .8)} ${n(y - 1)}" stroke="#6a2c18" stroke-width=".9"/>`;
  }
  for (const a of [-63, -33, -3, 27, 57]) {
    const [x, y] = at(a, 0), [u, v] = at(a, 1);
    out += `<path d="M${n(x)} ${n(y)}L${n(u)} ${n(v)}" stroke="#84b414" stroke-width="1.600"/>`;
  }
  out += '<ellipse cx="27" cy="16" rx="23.500" ry="14" fill="#b0ee10" stroke="#5c7a10"/><path d="M4 16H50M8 8L27 16L8 24M15 4L27 16L15 28M27 2V30M39 4L27 16L39 28M46 8L27 16L46 24M15 9L27 2L39 9L50 16L39 23L27 30L15 23L4 16z" fill="none" stroke="#6c960e" stroke-width=".8"/>';
  document.getElementById('part').innerHTML = out;
})();
</script>
<script src="https://cdn.jsdelivr.net/npm/bootstrap@5.3.0/dist/js/bootstrap.bundle.min.js"></script>
</body>
</html>
